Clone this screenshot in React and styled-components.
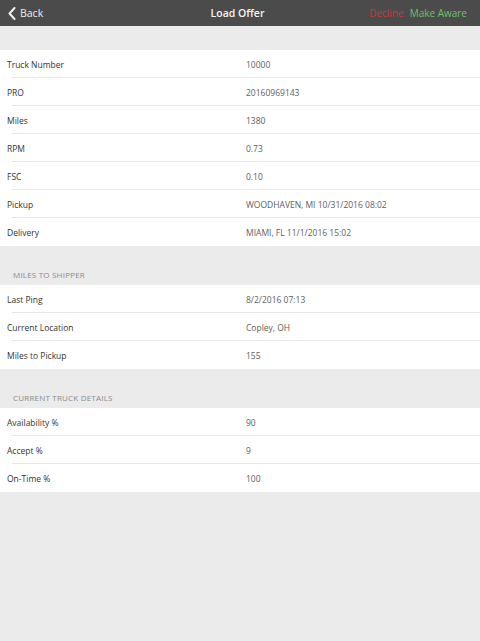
import React from 'react';
import styled, { createGlobalStyle } from 'styled-components';

const GlobalStyle = createGlobalStyle`
  html, body {
    margin: 0;
    padding: 0;
    background: #ebebeb;
    font-family: "Open Sans", "Liberation Sans", Arial, sans-serif;
  }
`;

const Page = styled.div`
  min-height: 641px;
  background: #ebebeb;
`;

const NavBar = styled.div`
  height: 26px;
  background: #4b4b4b;
  display: grid;
  grid-template-columns: 1fr auto 1fr;
  align-items: center;
  padding: 0 13px 0 8px;
`;

const BackButton = styled.div`
  display: flex;
  align-items: center;
  gap: 4px;
  color: #ededed;
  font-size: 10.5px;
  svg { display: block; }
`;

const Title = styled.div`
  color: #f4f4f4;
  font-size: 10.5px;
  font-weight: 600;
`;

const Actions = styled.div`
  display: flex;
  justify-content: flex-end;
  gap: 6px;
  font-size: 10px;
`;

const Action = styled.span`
  color: ${p => p.$color};
`;

const Spacer = styled.div`
  height: 24px;
`;

const SectionHeader = styled.div`
  height: 39px;
  box-sizing: border-box;
  display: flex;
  align-items: flex-end;
  padding: 0 0 5px 13px;
  font-size: 8px;
  color: #8a8a8a;
  letter-spacing: 0.2px;
  text-transform: uppercase;
`;

const Group = styled.div`
  background: #ffffff;
`;

const Row = styled.div`
  height: 28px;
  display: grid;
  grid-template-columns: 239px 1fr;
  align-items: center;
  position: relative;
  padding-left: 7px;
  font-size: 8.5px;
  &:not(:last-child)::after {
    content: '';
    position: absolute;
    left: 12px;
    right: 0;
    bottom: 0;
    height: 1px;
    background: #e6e6e6;
  }
`;

const Label = styled.span`
  color: #333333;
`;

const Value = styled.span`
  color: #606060;
`;

const Chevron = () => (
  <svg width="8" height="13" viewBox="0 0 8 13">
    <path d="M6.5 1 L1.5 6.5 L6.5 12" fill="none" stroke="#f0f0f0" strokeWidth="2" strokeLinecap="round" strokeLinejoin="round" />
  </svg>
);

const loadRows = [
  ['Truck Number', '10000'],
  ['PRO', '20160969143'],
  ['Miles', '1380'],
  ['RPM', '0.73'],
  ['FSC', '0.10'],
  ['Pickup', 'WOODHAVEN, MI 10/31/2016 08:02'],
  ['Delivery', 'MIAMI, FL 11/1/2016 15:02'],
];

const shipperRows = [
  ['Last Ping', '8/2/2016 07:13'],
  ['Current Location', 'Copley, OH'],
  ['Miles to Pickup', '155'],
];

const truckRows = [
  ['Availability %', '90'],
  ['Accept %', '9'],
  ['On-Time %', '100'],
];

const Rows = ({ items }) => (
  <Group>
    {items.map(([label, value]) => (
      <Row key={label}>
        <Label>{label}</Label>
        <Value>{value}</Value>
      </Row>
    ))}
  </Group>
);

const App = () => {
  return (
    <Page>
      <GlobalStyle />
      <NavBar>
        <BackButton>
          <Chevron />
          Back
        </BackButton>
        <Title>Load Offer</Title>
        <Actions>
          <Action $color="#c9383b">Decline</Action>
          <Action $color="#6cc26a">Make Aware</Action>
        </Actions>
      </NavBar>
      <Spacer />
      <Rows items={loadRows} />
      <SectionHeader>Miles to Shipper</SectionHeader>
      <Rows items={shipperRows} />
      <SectionHeader>Current Truck Details</SectionHeader>
      <Rows items={truckRows} />
    </Page>
  );
};

export default App;
